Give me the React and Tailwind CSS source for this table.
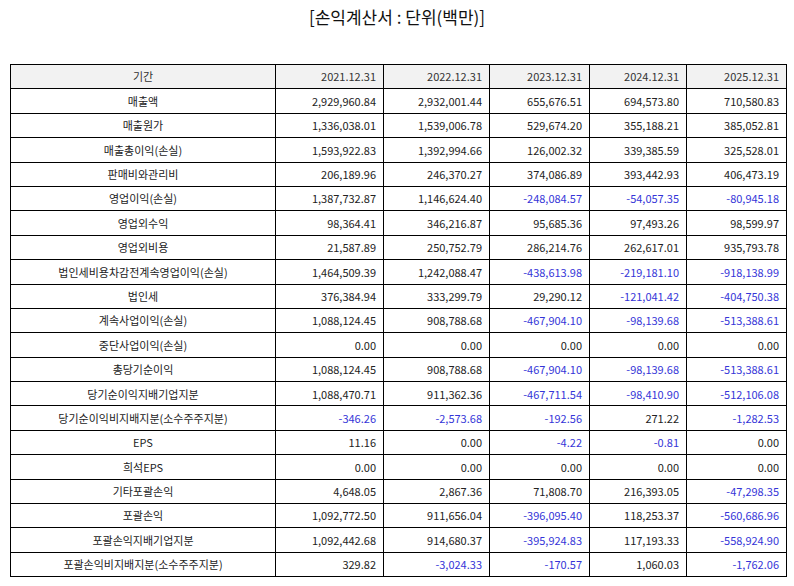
const rows = [
  ["매출액", "2,929,960.84", "2,932,001.44", "655,676.51", "694,573.80", "710,580.83"],
  ["매출원가", "1,336,038.01", "1,539,006.78", "529,674.20", "355,188.21", "385,052.81"],
  ["매출총이익(손실)", "1,593,922.83", "1,392,994.66", "126,002.32", "339,385.59", "325,528.01"],
  ["판매비와관리비", "206,189.96", "246,370.27", "374,086.89", "393,442.93", "406,473.19"],
  ["영업이익(손실)", "1,387,732.87", "1,146,624.40", "-248,084.57", "-54,057.35", "-80,945.18"],
  ["영업외수익", "98,364.41", "346,216.87", "95,685.36", "97,493.26", "98,599.97"],
  ["영업외비용", "21,587.89", "250,752.79", "286,214.76", "262,617.01", "935,793.78"],
  ["법인세비용차감전계속영업이익(손실)", "1,464,509.39", "1,242,088.47", "-438,613.98", "-219,181.10", "-918,138.99"],
  ["법인세", "376,384.94", "333,299.79", "29,290.12", "-121,041.42", "-404,750.38"],
  ["계속사업이익(손실)", "1,088,124.45", "908,788.68", "-467,904.10", "-98,139.68", "-513,388.61"],
  ["중단사업이익(손실)", "0.00", "0.00", "0.00", "0.00", "0.00"],
  ["총당기순이익", "1,088,124.45", "908,788.68", "-467,904.10", "-98,139.68", "-513,388.61"],
  ["당기순이익지배기업지분", "1,088,470.71", "911,362.36", "-467,711.54", "-98,410.90", "-512,106.08"],
  ["당기순이익비지배지분(소수주주지분)", "-346.26", "-2,573.68", "-192.56", "271.22", "-1,282.53"],
  ["EPS", "11.16", "0.00", "-4.22", "-0.81", "0.00"],
  ["희석EPS", "0.00", "0.00", "0.00", "0.00", "0.00"],
  ["기타포괄손익", "4,648.05", "2,867.36", "71,808.70", "216,393.05", "-47,298.35"],
  ["포괄손익", "1,092,772.50", "911,656.04", "-396,095.40", "118,253.37", "-560,686.96"],
  ["포괄손익지배기업지분", "1,092,442.68", "914,680.37", "-395,924.83", "117,193.33", "-558,924.90"],
  ["포괄손익비지배지분(소수주주지분)", "329.82", "-3,024.33", "-170.57", "1,060.03", "-1,762.06"],
];

const years = ["2021.12.31", "2022.12.31", "2023.12.31", "2024.12.31", "2025.12.31"];

export default function App() {
  return (
    <div className="w-[794px] h-[586px] bg-white text-[#222] font-['Noto_Sans_CJK_KR','Noto_Sans',sans-serif] overflow-hidden">
      <h1 className="text-center text-[17px] leading-[22px] pt-[6px] h-[64px] text-[#111]">
        [손익계산서 : 단위(백만)]
      </h1>
      <table className="ml-[10px] w-[776px] border-collapse text-[11px] table-fixed">
        <colgroup>
          <col className="w-[265px]" />
          <col className="w-[108px]" />
          <col className="w-[106px]" />
          <col className="w-[100px]" />
          <col className="w-[97px]" />
          <col className="w-[100px]" />
        </colgroup>
        <thead>
          <tr className="h-[24.4px] bg-[#f2f2f2]">
            <th className="border border-black font-normal text-center p-0 text-[#333]">기간</th>
            {years.map((y) => (
              <th key={y} className="border border-black font-normal text-right pr-[7px] p-0 text-[#333]">{y}</th>
            ))}
          </tr>
        </thead>
        <tbody>
          {rows.map((r) => (
            <tr key={r[0]} className="h-[24.4px]">
              <td className="border border-black text-center p-0">{r[0]}</td>
              {r.slice(1).map((v, i) => (
                <td
                  key={i}
                  className={
                    v.startsWith("-")
                      ? "border border-black text-right pr-[7px] p-0 text-[#3535d8]"
                      : "border border-black text-right pr-[7px] p-0"
                  }
                >
                  {v}
                </td>
              ))}
            </tr>
          ))}
        </tbody>
      </table>
    </div>
  );
}
